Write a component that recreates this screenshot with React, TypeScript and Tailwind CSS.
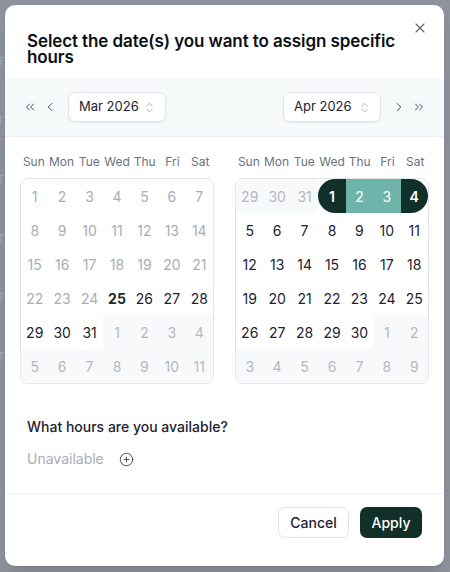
import { X, ChevronsLeft, ChevronLeft, ChevronRight, ChevronsRight, ChevronsUpDown, CirclePlus } from "lucide-react";

type Cell = {
  day: number;
  outside?: boolean;
  muted?: boolean;
  today?: boolean;
  sel?: "start" | "mid" | "end";
};

const WEEKDAYS = ["Sun", "Mon", "Tue", "Wed", "Thu", "Fri", "Sat"];

const march: Cell[] = [
  ...Array.from({ length: 24 }, (_, i) => ({ day: i + 1, muted: true })),
  { day: 25, today: true },
  ...[26, 27, 28, 29, 30, 31].map((d) => ({ day: d })),
  ...[1, 2, 3, 4, 5, 6, 7, 8, 9, 10, 11].map((d) => ({ day: d, outside: true })),
];

const april: Cell[] = [
  ...[29, 30, 31].map((d) => ({ day: d, outside: true })),
  { day: 1, sel: "start" },
  { day: 2, sel: "mid" },
  { day: 3, sel: "mid" },
  { day: 4, sel: "end" },
  ...Array.from({ length: 26 }, (_, i) => ({ day: i + 5 })),
  ...[1, 2, 3, 4, 5, 6, 7, 8, 9].map((d) => ({ day: d, outside: true })),
];

function Day({ c }: { c: Cell }) {
  if (c.sel) {
    const shape =
      c.sel === "start"
        ? "rounded-l-full bg-[#11302a] text-white font-semibold"
        : c.sel === "end"
        ? "rounded-r-full bg-[#11302a] text-white font-semibold"
        : "bg-[#6fb4ab] text-white";
    return (
      <div className={`flex h-[34px] items-center justify-center text-[14px] ${shape}`}>
        {c.day}
      </div>
    );
  }
  let cls = "text-[#1d2330]";
  if (c.outside) cls = "bg-[#f8f9fb] text-[#b4b8c1]";
  else if (c.muted) cls = "text-[#a9adb6]";
  else if (c.today) cls = "font-bold text-[#11302a]";
  return (
    <div className={`flex h-[34px] items-center justify-center text-[14px] ${cls}`}>
      {c.day}
    </div>
  );
}

function Month({ cells }: { cells: Cell[] }) {
  return (
    <div className="flex flex-col">
      <div className="grid h-[17px] grid-cols-7 items-center text-[12px] text-[#6b7280]">
        {WEEKDAYS.map((w) => (
          <div key={w} className="text-center">
            {w}
          </div>
        ))}
      </div>
      <div className="mt-[8px] grid grid-cols-7 overflow-hidden rounded-[8px] border border-[#e4e6ea]">
        {cells.map((c, i) => (
          <Day key={i} c={c} />
        ))}
      </div>
    </div>
  );
}

function MonthSelect({ label }: { label: string }) {
  return (
    <div className="flex h-[30px] w-[98px] items-center justify-between whitespace-nowrap rounded-[7px] border border-[#e2e5e9] bg-white pl-[10px] pr-[9px] text-[13px] text-[#1d2330] shadow-[0_1px_2px_rgba(0,0,0,0.06)]">
      <span>{label}</span>
      <ChevronsUpDown className="h-[13px] w-[13px] shrink-0 text-[#a9adb6]" strokeWidth={1.8} />
    </div>
  );
}

export default function App() {
  return (
    <div
      className="relative h-[572px] w-[450px] overflow-hidden bg-[#8e929b] p-[5px]"
      style={{ fontFamily: "Inter, 'Noto Sans', sans-serif" }}
    >
      <div className="absolute left-0 top-0 flex h-full flex-col gap-[43px] pt-[54px] text-[12px] leading-[16px] text-[#a3a7ae]">
        {["T", "T", "T", "T", "T", "T"].map((t, i) => (
          <span key={i} className="-ml-[3px]">{t}</span>
        ))}
      </div>
      <div className="relative flex h-[561px] w-[439px] flex-col rounded-[10px] bg-white shadow-lg">
        <div className="relative px-[22px] pt-[28px] pb-[13px]">
          <h2 className="w-[370px] text-[17px] font-semibold leading-[16px] tracking-[-0.1px] text-[#0b0f17]">
            Select the date(s) you want to assign specific hours
          </h2>
          <button className="absolute right-[16px] top-[15px] text-[#5b606b]">
            <X className="h-[16px] w-[16px]" strokeWidth={1.6} />
          </button>
        </div>

        <div className="flex h-[59px] items-center justify-between border-b border-[#eceef1] bg-[#f6f9fa] px-[18px]">
          <div className="flex items-center">
            <ChevronsLeft className="h-[14px] w-[14px] text-[#3b404a]" strokeWidth={1.6} />
            <ChevronLeft className="ml-[6px] h-[14px] w-[14px] text-[#3b404a]" strokeWidth={1.6} />
            <div className="ml-[11px]">
              <MonthSelect label="Mar 2026" />
            </div>
          </div>
          <div className="flex items-center">
            <MonthSelect label="Apr 2026" />
            <ChevronRight className="ml-[11px] h-[14px] w-[14px] text-[#3b404a]" strokeWidth={1.6} />
            <ChevronsRight className="ml-[6px] h-[14px] w-[14px] text-[#3b404a]" strokeWidth={1.6} />
          </div>
        </div>

        <div className="mt-[16px] grid grid-cols-2 gap-[21px] px-[15px]">
          <Month cells={march} />
          <Month cells={april} />
        </div>

        <div className="px-[22px] pt-[33px]">
          <p className="text-[14px] font-medium leading-[20px] text-[#1d2330]">
            What hours are you available?
          </p>
          <div className="mt-[12px] flex items-center gap-[15px]">
            <span className="text-[14px] leading-[20px] text-[#a9adb6]">Unavailable</span>
            <CirclePlus className="h-[15px] w-[15px] text-[#4b505b]" strokeWidth={1.6} />
          </div>
        </div>

        <div className="mt-auto flex items-center justify-end gap-[11px] border-t border-[#eceef1] px-[22px] pt-[13px] pb-[28px]">
          <button className="h-[31px] w-[71px] rounded-[7px] border border-[#e2e5e9] bg-white text-[14px] font-medium text-[#1d2330]">
            Cancel
          </button>
          <button className="h-[31px] w-[62px] rounded-[7px] bg-[#11302a] text-[14px] font-medium text-white">
            Apply
          </button>
        </div>
      </div>
    </div>
  );
}
